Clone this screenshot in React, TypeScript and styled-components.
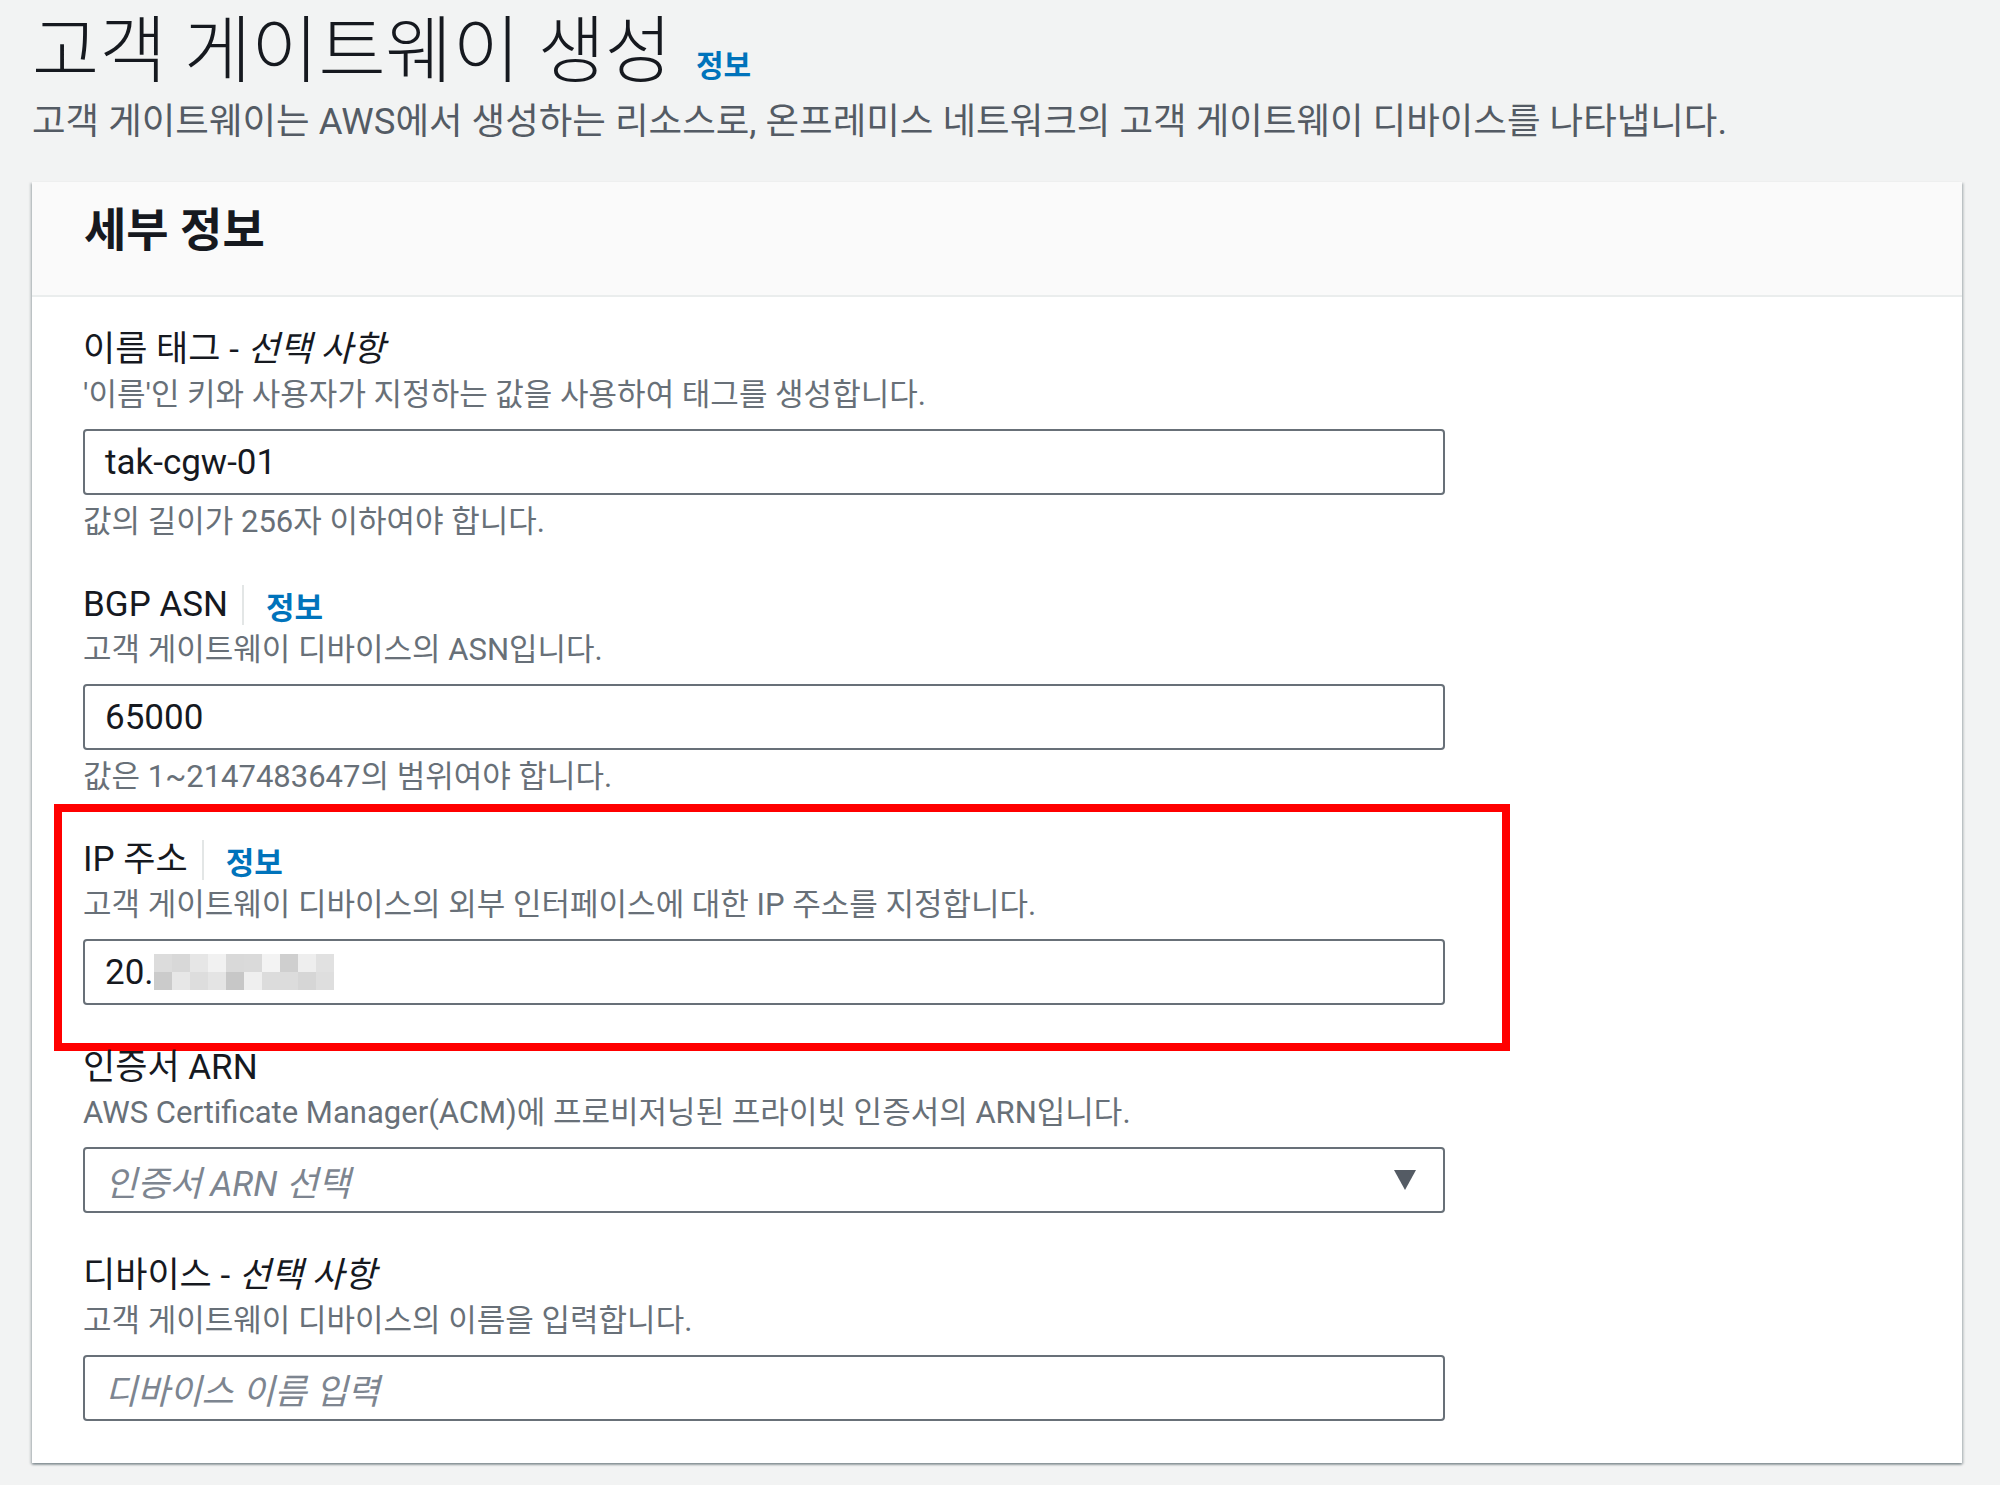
import React from 'react';
import styled, { createGlobalStyle, css } from 'styled-components';

const GlobalStyle = createGlobalStyle`
  html, body {
    margin: 0;
    padding: 0;
    background: #f2f3f3;
  }
  body {
    font-family: Roboto, "Noto Sans CJK KR", sans-serif;
    color: #16191f;
  }
`;

const Page = styled.div`
  width: 2000px;
  height: 1485px;
  box-sizing: border-box;
  padding: 9px 38px 0 32px;
  background: #f2f3f3;
  overflow: hidden;
`;

const TitleRow = styled.div`
  display: flex;
  align-items: baseline;
  gap: 24px;
`;

const Title = styled.h1`
  margin: 0;
  font-size: 73px;
  font-weight: 300;
  line-height: 84px;
  color: #16191f;
`;

const InfoLink = styled.a<{ $size: number }>`
  color: #0073bb;
  font-weight: 700;
  font-size: ${(p) => p.$size}px;
  text-decoration: none;
  cursor: pointer;
`;

const PageDesc = styled.p`
  margin: 7px 0 0;
  font-size: 36.5px;
  line-height: 44px;
  color: #545b64;
`;

const Card = styled.section`
  margin-top: 38px;
  background: #fff;
  box-shadow: 0 2px 2px 0 rgba(0, 28, 36, 0.3), 2px 1px 2px 0 rgba(0, 28, 36, 0.15),
    -2px 1px 2px 0 rgba(0, 28, 36, 0.15);
`;

const CardHeader = styled.div`
  background: #fafafa;
  border-bottom: 2px solid #eaeded;
  padding: 26px 52px 43px;
`;

const CardTitle = styled.h2`
  margin: 0;
  font-size: 46px;
  font-weight: 700;
  line-height: 44px;
  color: #16191f;
`;

const CardBody = styled.div`
  padding: 31px 51px 42px;
  display: flex;
  flex-direction: column;
  gap: 41px;
`;

const Field = styled.div<{ $marked?: boolean }>`
  position: relative;
  width: 1362px;
  display: flex;
  flex-direction: column;

  ${(p) =>
    p.$marked &&
    css`
      &::after {
        content: '';
        position: absolute;
        left: -29px;
        top: -34px;
        right: -65px;
        bottom: -46px;
        border: 8px solid #ff0000;
        pointer-events: none;
      }
    `}
`;

const LabelRow = styled.div`
  display: flex;
  align-items: center;
  height: 44px;
`;

const Label = styled.span`
  font-size: 35px;
  line-height: 44px;
  color: #16191f;

  > em {
    font-style: italic;
  }
`;

const Divider = styled.span`
  width: 2px;
  height: 40px;
  background: #e3e6e6;
  margin: 0 22px 0 14px;
`;

const Desc = styled.div`
  font-size: 31px;
  line-height: 46px;
  color: #687078;
`;

const Constraint = styled.div`
  margin-top: 7px;
  font-size: 31px;
  line-height: 40px;
  color: #687078;
`;

const InputBox = styled.div<{ $placeholder?: boolean }>`
  margin-top: 11px;
  height: 66px;
  box-sizing: border-box;
  border: 2px solid #687078;
  border-radius: 4px;
  background: #fff;
  padding: 0 20px;
  display: flex;
  align-items: center;
  font-size: 35px;
  color: ${(p) => (p.$placeholder ? '#7d8590' : '#16191f')};
  font-style: ${(p) => (p.$placeholder ? 'italic' : 'normal')};
`;

const SelectBox = styled(InputBox)`
  justify-content: space-between;
  padding-right: 26px;
`;

const mosaic = [
  ['#dcdcdc', '#d8d8d8', '#e6e6e6', '#f1f1f1', '#d9d9d9', '#dadada', '#f3f3f3', '#cfcfcf', '#eeeeee', '#e1e1e1'],
  ['#cbcbcb', '#e7e7e7', '#dddddd', '#e4e4e4', '#c7c7c7', '#efefef', '#dcdcdc', '#dcdcdc', '#d6d6d6', '#dedede'],
];

function Blur() {
  return (
    <svg width="180" height="36" viewBox="0 0 180 36">
      {mosaic.map((row, r) =>
        row.map((c, i) => <rect key={`${r}-${i}`} x={i * 18} y={r * 18} width="18" height="18" fill={c} />)
      )}
    </svg>
  );
}

function Caret() {
  return (
    <svg width="24" height="22" viewBox="0 0 24 22">
      <path d="M1 1 H23 L12 21 Z" fill="#545b64" />
    </svg>
  );
}

export default function App() {
  return (
    <Page>
      <GlobalStyle />
      <TitleRow>
        <Title>고객 게이트웨이 생성</Title>
        <InfoLink $size={30}>정보</InfoLink>
      </TitleRow>
      <PageDesc>
        고객 게이트웨이는 AWS에서 생성하는 리소스로, 온프레미스 네트워크의 고객 게이트웨이 디바이스를 나타냅니다.
      </PageDesc>

      <Card>
        <CardHeader>
          <CardTitle>세부 정보</CardTitle>
        </CardHeader>
        <CardBody>
          <Field>
            <LabelRow>
              <Label>
                이름 태그 - <em>선택 사항</em>
              </Label>
            </LabelRow>
            <Desc>'이름'인 키와 사용자가 지정하는 값을 사용하여 태그를 생성합니다.</Desc>
            <InputBox>tak-cgw-01</InputBox>
            <Constraint>값의 길이가 256자 이하여야 합니다.</Constraint>
          </Field>

          <Field>
            <LabelRow>
              <Label>BGP ASN</Label>
              <Divider />
              <InfoLink $size={31}>정보</InfoLink>
            </LabelRow>
            <Desc>고객 게이트웨이 디바이스의 ASN입니다.</Desc>
            <InputBox>65000</InputBox>
            <Constraint>값은 1~2147483647의 범위여야 합니다.</Constraint>
          </Field>

          <Field $marked>
            <LabelRow>
              <Label>IP 주소</Label>
              <Divider />
              <InfoLink $size={31}>정보</InfoLink>
            </LabelRow>
            <Desc>고객 게이트웨이 디바이스의 외부 인터페이스에 대한 IP 주소를 지정합니다.</Desc>
            <InputBox>
              20.
              <Blur />
            </InputBox>
          </Field>

          <Field>
            <LabelRow>
              <Label>인증서 ARN</Label>
            </LabelRow>
            <Desc>AWS Certificate Manager(ACM)에 프로비저닝된 프라이빗 인증서의 ARN입니다.</Desc>
            <SelectBox $placeholder>
              인증서 ARN 선택
              <Caret />
            </SelectBox>
          </Field>

          <Field>
            <LabelRow>
              <Label>
                디바이스 - <em>선택 사항</em>
              </Label>
            </LabelRow>
            <Desc>고객 게이트웨이 디바이스의 이름을 입력합니다.</Desc>
            <InputBox $placeholder>디바이스 이름 입력</InputBox>
          </Field>
        </CardBody>
      </Card>
    </Page>
  );
}
